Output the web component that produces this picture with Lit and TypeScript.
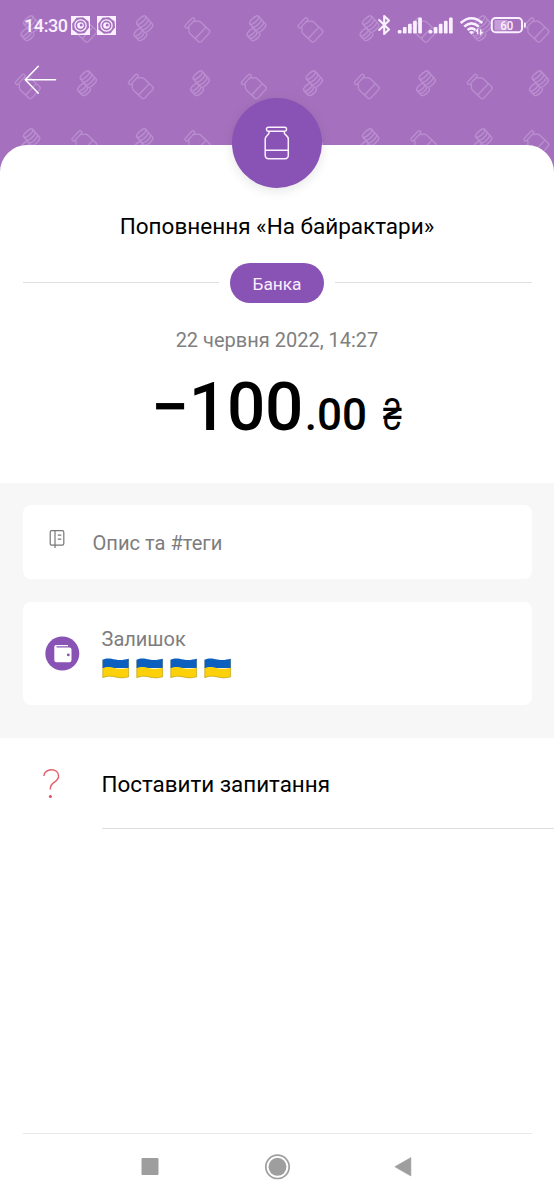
import { LitElement, html, css, svg } from "lit";
import { customElement } from "lit/decorators.js";

@customElement("status-bar")
class StatusBar extends LitElement {
  static styles = css`
    :host { display: block; color: #fbf0ff; }
    .bar { display: flex; align-items: center; height: 50px; padding-left: 24px; box-sizing: border-box; }
    .time { font-size: 18px; font-weight: 500; line-height: 20px; width: 47px; white-space: nowrap; padding-top: 1px; letter-spacing: -0.4px; }
    svg { display: block; flex: none; }
    .app { margin-right: 7px; }
    .right { margin-left: auto; }
  `;
  appIcon() {
    return html`<svg class="app" width="19" height="19" viewBox="0 0 19 19" fill="none">
      <rect width="19" height="19" fill="#fbf0ff" />
      <path d="M1.2 7.5 L5.5 1.8 L12 1.2 L17.6 5.5 L18 11.5 L13.5 17.2 L7 17.8 L1.4 13.5z" fill="#a571be" />
      <circle cx="9.5" cy="9.5" r="5.6" stroke="#fbf0ff" stroke-width="1.3" />
      <circle cx="9.5" cy="9.5" r="3.3" fill="#fbf0ff" />
      <circle cx="10.2" cy="8.9" r="1.5" fill="#a571be" />
    </svg>`;
  }
  render() {
    const bars = (x: number) =>
      [0, 1, 2, 3, 4].map(
        (i) => svg`<rect x=${x + i * 5.1} y=${30 - i * 3.1} width="3.7" height=${3.4 + i * 3.1} rx="1.2" fill="#fbf0ff"/>`
      );
    return html`<div class="bar">
      <span class="time">14:30</span>${this.appIcon()}${this.appIcon()}
      <svg class="right" width="180" height="50" viewBox="374 0 180 50" fill="none">
        <path d="M379.2 20 L389 29.6 L384.2 34 V16 L389 20.4 L379.2 30" stroke="#fbf0ff" stroke-width="2.1" stroke-linejoin="round" stroke-linecap="round" />
        ${bars(397.8)}${bars(428.6)}
        <g stroke="#fbf0ff" stroke-width="2.6">
          <path d="M460.7 23 Q471.5 13.5 482.3 23" />
          <path d="M464.2 26.6 Q471.5 20 478.8 26.6" />
          <path d="M467.6 30 Q471.5 26.6 475.4 30" />
        </g>
        <path d="M469 32 Q471.5 30.2 474 32 L471.5 34.6z" fill="#fbf0ff" />
        <path d="M477.6 34V29.8l-1.8 1.8M480.6 29.6V34l1.9-1.9" stroke="#fbf0ff" stroke-width="1.4" />
        <rect x="494.5" y="20" width="13" height="10.5" fill="#c79ed9" />
        <rect x="491.8" y="18" width="30.2" height="14.2" rx="3.8" stroke="#fbf0ff" stroke-width="2" />
        <rect x="524" y="22.6" width="1.8" height="5" rx=".8" fill="#fbf0ff" />
        <text x="506.8" y="29.8" text-anchor="middle" font-size="12.5" font-weight="500" font-family="Roboto, sans-serif" fill="#fbf0ff" textLength="13" lengthAdjust="spacingAndGlyphs">60</text>
      </svg>
    </div>`;
  }
}

@customElement("ua-flag")
class UaFlag extends LitElement {
  static styles = css`:host { display: block; width: 28px; height: 21px; } svg { display: block; }`;
  render() {
    return html`<svg width="28" height="21" viewBox="0 0 28 21">
      <path d="M.5 1.7 C5 -.5 8.5 .5 13.5 1.5 C19 2.6 22 1.8 26.8 .8 V10 H.5z" fill="#0b5fbe" />
      <path d="M.5 10.2 C5 8.3 8.5 9 13.5 10.2 C19 11.4 22 10.7 26.8 9.7 V19 C22 20.2 19 20.8 13.5 19.3 C8.5 18 5 18 .5 20z" fill="#fdd10a" />
      <path d="M.8 1.8 V19.6 C5 17.8 8.5 17.8 13.5 19 C19 20.3 22 20 26.6 18.8 V1" fill="none" stroke="#766a25" stroke-opacity=".45" stroke-width=".7" />
    </svg>`;
  }
}

@customElement("app-root")
class AppRoot extends LitElement {
  static styles = css`
    :host { display: block; font-family: Roboto, sans-serif; background: #fff; color: #000; }
    * { box-sizing: border-box; }
    .page { display: flex; flex-direction: column; height: 1200px; width: 554px; overflow: hidden; }
    svg { display: block; flex: none; }
    .header { position: relative; height: 175px; flex: none; background: #a571be; }
    .pattern { position: absolute; inset: 0; }
    .head-content { position: relative; }
    .back { margin: 15px 0 0 24px; }
    .sheet { position: relative; margin-top: -30px; height: 338px; flex: none; background: #fff; border-radius: 27px 27px 0 0; display: flex; flex-direction: column; align-items: center; }
    .badge { width: 90px; height: 90px; margin-top: -47.5px; border-radius: 50%; background: #8853b4; display: flex; align-items: center; justify-content: center; box-shadow: 0 3px 12px rgba(0,0,0,.1); flex: none; }
    .title { margin: 24.5px 0 0; font-size: 22.5px; line-height: 28px; font-weight: 400; white-space: nowrap; }
    .category { display: flex; align-items: center; gap: 11.5px; width: 509px; margin-top: 23px; }
    .rule { flex: 1; height: 1px; margin-top: -1px; background: #dfdfdf; }
    .chip { width: 93.5px; height: 40px; border-radius: 20px; background: #8853b4; color: #fbeeff; font-size: 17.3px; line-height: 42px; text-align: center; }
    .date { margin-top: 25px; font-size: 20px; line-height: 24px; color: #808080; white-space: nowrap; }
    .amount { display: flex; align-items: baseline; margin: 15px 0 0 2px; height: 80px; line-height: 80px; font-weight: 500; white-space: pre; }
    .whole { font-size: 67.5px; letter-spacing: -0.2px; }
    .cents { font-size: 44px; margin-left: 1.5px; }
    .currency { width: 22px; margin-left: 16px; font: 500 45px/80px "Open Sans", sans-serif; transform: scaleX(.75); transform-origin: 0 0; }
    .details { height: 255px; flex: none; background: #f7f7f7; padding: 22px 22.5px 0; display: flex; flex-direction: column; gap: 23px; }
    .card { background: #fff; border-radius: 8px; display: flex; align-items: center; color: #7d7d7d; font-size: 20px; line-height: 24px; }
    .note { height: 74px; padding-left: 26px; gap: 27px; }
    .note svg { margin-top: -7px; }
    .note span { padding-top: 2px; font-size: 20.1px; }
    .balance { height: 103px; padding-left: 22px; gap: 22px; }
    .flags { display: flex; gap: 6px; margin-top: 7px; }
    .balance-text { margin-top: -1px; }
    .question { display: flex; height: 91px; flex: none; }
    .q-icon { width: 101.5px; padding: 31px 0 0 42px; }
    .q-text { flex: 1; border-bottom: 1px solid #dedede; font-size: 22.4px; line-height: 92px; height: 91px; }
    .nav { margin-top: auto; width: 509px; height: 67px; align-self: center; border-top: 1px solid #e8e8e8; display: flex; }
  `;

  jar(x: number, y: number) {
    return svg`<g transform="translate(${x} ${y}) rotate(-47) scale(.9)">
      <rect x="-7" y="-13.5" width="14" height="3.6" rx="1.4"/>
      <path d="M-5 -9.9 V-8.3 C-7 -7 -8.7 -6.2 -8.7 -3.6 V9.3 Q-8.7 11.8 -6.2 11.8 H6.2 Q8.7 11.8 8.7 9.3 V-3.6 C8.7 -6.2 7 -7 5 -8.3 V-9.9 M-8.7 4.6 H8.7"/>
    </g>`;
  }

  coins(x: number, y: number) {
    return svg`<g transform="translate(${x} ${y}) rotate(-42)">
      <ellipse cx="5" cy="-7.4" rx="5.8" ry="2.2"/>
      <path d="M-.8 -7.4 V3.2 C-.8 6.2 10.8 6.2 10.8 3.2 V-7.4 M-.8 -3.8 C-.8 -.8 10.8 -.8 10.8 -3.8 M-.8 -.2 C-.8 2.8 10.8 2.8 10.8 -.2"/>
      <path d="M-.8 -1.8 C-3 -3.6 -10.4 -3 -10.4 -.4 V5.6 C-10.4 9 .4 9 .4 5.4 M-10.4 -.4 C-10.4 2.2 -3 2.4 -.8 .8 M-10.4 2.6 C-10.4 5.6 -3 5.6 -.8 3.8"/>
    </g>`;
  }

  render() {
    return html`<div class="page">
      <div class="header">
        <svg class="pattern" width="554" height="175" viewBox="0 0 554 175">
          <defs>
            <pattern id="doodles" width="113" height="113" patternUnits="userSpaceOnUse">
              <g fill="none" stroke="#ba8ed0" stroke-width="1.4" stroke-linejoin="round">
                ${this.coins(29.4, 29)}${this.jar(84.6, 30)}${this.jar(28, 86.5)}${this.coins(86, 84)}
              </g>
            </pattern>
          </defs>
          <rect width="554" height="175" fill="url(#doodles)" />
        </svg>
        <div class="head-content">
          <status-bar></status-bar>
          <svg class="back" width="34" height="30" viewBox="0 0 34 30" fill="none" stroke="#fff" stroke-width="1.5" stroke-linecap="round">
            <path d="M31.5 14.8 H1.5 M14.3 1.3 L1.3 14.8 L14.3 28.3" />
          </svg>
        </div>
      </div>

      <div class="sheet">
        <div class="badge">
          <svg width="26" height="34" viewBox="0 0 26 34" fill="none" stroke="#fdf1ff" stroke-width="1.5" stroke-linejoin="round">
            <rect x="2.5" y="1.2" width="20" height="4" rx="1.7" />
            <path d="M5 5.2 V6.7 C5 9 1.2 9.6 1.2 13 V29.3 Q1.2 32.7 4.6 32.7 H20.9 Q24.3 32.7 24.3 29.3 V13 C24.3 9.6 20.3 9 20.3 6.7 V5.2 M1.2 24.3 H24.3" />
          </svg>
        </div>
        <h1 class="title">Поповнення «На байрактари»</h1>
        <div class="category"><i class="rule"></i><span class="chip">Банка</span><i class="rule"></i></div>
        <div class="date">22 червня 2022, 14:27</div>
        <div class="amount"><span class="whole">−100</span><span class="cents">.00</span><span class="currency">₴</span></div>
      </div>

      <div class="details">
        <div class="card note">
          <svg width="17" height="20" viewBox="0 0 17 20" fill="none" stroke="#777" stroke-width="1.2">
            <rect x="1.2" y="1.6" width="13.6" height="14.6" rx="1.6" />
            <path d="M6 1.6 V19 M8.8 6.2 H12.3 M8.8 10.2 H12.3" />
          </svg>
          <span>Опис та #теги</span>
        </div>
        <div class="card balance">
          <svg width="35" height="35" viewBox="0 0 35 35">
            <circle cx="17.3" cy="17.5" r="17" fill="#8853b4" />
            <path d="M9.3 10.7 Q9.3 9 11 9 H23 V10.2 H11.5 V11.4 H24.5 Q26.5 11.4 26.5 13.4 V24 Q26.5 26.2 24.3 26.2 H11.5 Q9.3 26.2 9.3 24z" fill="#fff" />
            <circle cx="23.3" cy="18.9" r="1.4" fill="#8853b4" />
          </svg>
          <div class="balance-text">
            <div>Залишок</div>
            <div class="flags">${[0, 1, 2, 3].map(() => html`<ua-flag></ua-flag>`)}</div>
          </div>
        </div>
      </div>

      <div class="question">
        <div class="q-icon">
          <svg width="20" height="30" viewBox="0 0 20 30" fill="none">
            <path d="M1.8 7 C2.2 -1.2 16.6 -1.6 16.6 7.2 C16.6 13 8.4 13.2 8.4 18.8 V20.6" stroke="#e0616b" stroke-width="1.4" />
            <circle cx="8.4" cy="27.6" r="1.5" fill="#e0505c" />
          </svg>
        </div>
        <div class="q-text">Поставити запитання</div>
      </div>

      <div class="nav">
        <svg width="509" height="66" viewBox="22.5 1134 509 66" fill="#9e9e9e">
          <rect x="141" y="1158" width="17" height="17" rx="1" />
          <circle cx="277" cy="1166.8" r="9" />
          <circle cx="277" cy="1166.8" r="11.7" fill="none" stroke="#9e9e9e" stroke-width="1.7" />
          <path d="M394.3 1166.8 L410.4 1157.6 V1176z" stroke="#9e9e9e" stroke-linejoin="round" stroke-width=".6" />
        </svg>
      </div>
    </div>`;
  }
}
